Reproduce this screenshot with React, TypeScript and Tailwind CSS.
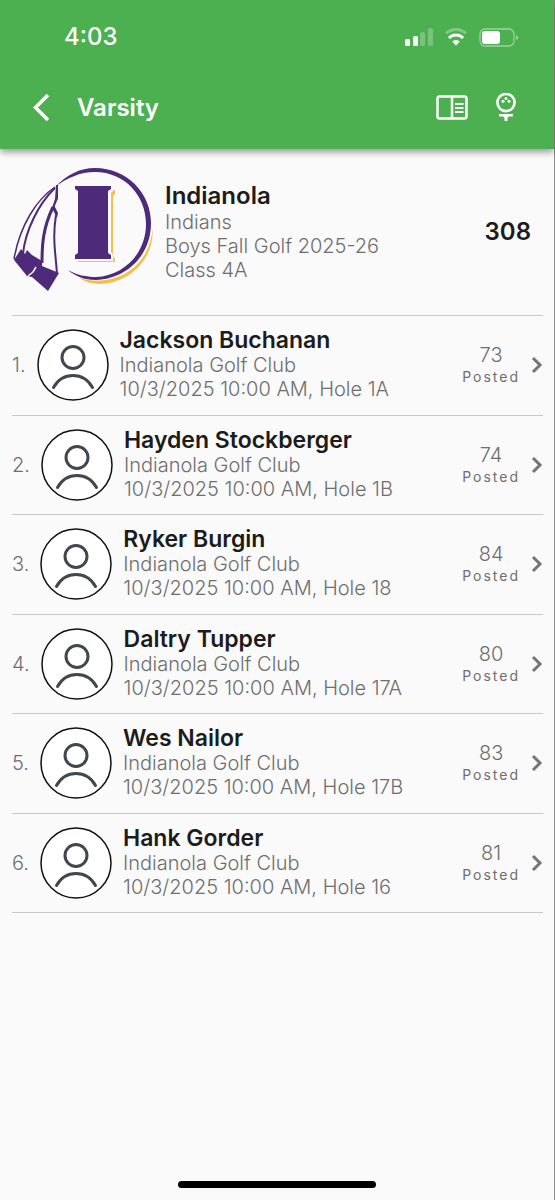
import type { ReactNode } from 'react'

interface Player {
  name: string
  hole: string
  score: number
}

const players: Player[] = [
  { name: 'Jackson Buchanan', hole: '1A', score: 73 },
  { name: 'Hayden Stockberger', hole: '1B', score: 74 },
  { name: 'Ryker Burgin', hole: '18', score: 84 },
  { name: 'Daltry Tupper', hole: '17A', score: 80 },
  { name: 'Wes Nailor', hole: '17B', score: 83 },
  { name: 'Hank Gorder', hole: '16', score: 81 },
]

function StatusIcons() {
  return (
    <div className="flex items-center gap-3" aria-hidden="true">
      <svg width="28" height="18" viewBox="0 0 28 18" fill="#fff">
        <rect x="0" y="11" width="5" height="7" rx="1.5" />
        <rect x="8" y="8" width="5" height="10" rx="1.5" />
        <rect x="15" y="4" width="5" height="14" rx="1.5" opacity=".25" />
        <rect x="23" y="0" width="5" height="18" rx="1.5" opacity=".25" />
      </svg>
      <svg width="22" height="18" viewBox="0 0 22 18" fill="none" strokeWidth="3">
        <path d="M1 5.500a14.200 14.200 0 0 1 20 0" stroke="#fff" opacity=".3" />
        <path d="M4 10a9.900 9.900 0 0 1 14 0" stroke="#fff" />
        <path d="M7.200 13.500a5.400 5.400 0 0 1 7.600 0L11 17.500z" fill="#fff" />
      </svg>
      <svg width="40" height="19" viewBox="0 0 40 19">
        <rect x="1" y="1" width="34" height="17" rx="5" fill="none" stroke="#fff" strokeWidth="1.3" opacity=".45" />
        <rect x="3" y="3" width="18" height="13" rx="3" fill="#fff" />
        <path d="M37 7q2 1 2 2.500t-2 2.500z" fill="#fff" opacity=".5" />
      </svg>
    </div>
  )
}

function TeamLogo() {
  return (
    <svg className="shrink-0" width="141" height="126" viewBox="0 0 141 126" role="img" aria-label="Indianola logo">
      {/* Ring */}
      <path d="M67 111c36 10 70-10 73.500-49 2 27-20 54-52.500 55-9 0-16-3-21-6z" fill="#f3c14b" />
      <path
        d="M43 20C56 7 68 1 83 1c32 0 56 25 56 55 0 33-25 56-55 57-12 0-21-4-28-10 9 5 18 7 28 7 27-1 50-23 50-53C134 29 113 5 83 5 68 5 55 11 43 20z"
        fill="#4e2a7a"
      />
      {/* Letter block */}
      <path d="M68 23h35v4l-2 2v60l2 3v3H66v-4z" fill="#f3c14b" />
      <path d="M61 17h40v7l-2 2v59l2 3v6H61v-7l4-3V26l-4-2z" fill="#fafafa" />
      <path d="M63 19h36v3l-3 2v62l3 2v4H63v-4l3-2V24l-3-2z" fill="#4e2a7a" />
      {/* Feathers */}
      <g fill="none" stroke="#4e2a7a">
        <path d="M43 20C25 32 8 58 2 92" strokeWidth="1.500" />
        <path d="M43 21C26 37 13 65 11 87" strokeWidth="2" />
        <path d="M45 18v13l-4 10" strokeWidth="2" />
        <path d="M41 40C31 61 30 77 30 96" strokeWidth="3" />
        <path d="M44 48c-4 24 0 40 1 60" strokeWidth="2" />
      </g>
      <path d="M44 19l2 12-4 7 4 8-1 5-5-10 3-9z" fill="#4e2a7a" />
      <path d="M2 93l7-11 4 5 2-4 5 5 10 6v5l17 7-11 18-16-14-5-1z" fill="#4e2a7a" />
      <path d="M16 109l5-4 3-5" fill="none" stroke="#fafafa" strokeWidth="1.500" />
    </svg>
  )
}

function IconButton({ label, children }: { label: string; children: ReactNode }) {
  return (
    <button type="button" aria-label={label} className="flex h-9 items-center justify-center">
      {children}
    </button>
  )
}

function Header() {
  return (
    <header className="bg-[#4caf50] text-white shadow-[0_3px_7px_rgba(0,0,0,0.4)]">
      <div className="flex h-[74px] items-center justify-between pl-16 pr-[35px]">
        <span className="text-2xl font-medium">4:03</span>
        <StatusIcons />
      </div>
      <div className="flex h-[75px] items-center pb-2 pl-8 pr-[38px]">
        <IconButton label="Back">
          <svg width="18" height="28" viewBox="0 0 18 28" fill="none" stroke="#fff" strokeWidth="3.500">
            <path d="M16 1L3.500 13.500 16 26" />
          </svg>
        </IconButton>
        <h1 className="ml-[27px] flex-1 text-2xl font-semibold">Varsity</h1>
        <div className="flex items-center gap-7">
          <IconButton label="Scorecard">
            <svg width="32" height="26" viewBox="0 0 32 26" fill="none" stroke="#fff">
              <rect x="1.500" y="1.500" width="29" height="22" rx="2" strokeWidth="2.500" />
              <path d="M16 2v22" strokeWidth="2.500" />
              <path d="M19 9h8.500M19 13h8.500M19 17h8.500" strokeWidth="2" />
            </svg>
          </IconButton>
          <IconButton label="Golf">
            <svg width="20" height="29" viewBox="1 1 20 29">
              <circle cx="11" cy="10.500" r="8.600" fill="none" stroke="#fff" strokeWidth="2.600" />
              <circle cx="11" cy="6.500" r="1.500" fill="#fff" />
              <circle cx="8" cy="9.300" r="1.500" fill="#fff" />
              <circle cx="14" cy="9.300" r="1.500" fill="#fff" />
              <path d="M4 22h14v2.500h-3.500q-2 0-2 2V29h-3v-2.500q0-2-2-2H4z" fill="#fff" />
            </svg>
          </IconButton>
        </div>
      </div>
    </header>
  )
}

function PlayerRow({ player, place }: { player: Player; place: number }) {
  return (
    <li className="border-b border-[#c8c8c8]">
      <a href="#" className="flex h-full items-center">
        <span className="text-xl font-light">{place}.</span>
        <svg className="ml-[11px] shrink-0" width="72" height="72" viewBox="0 0 72 72" fill="none" aria-hidden="true">
          <circle cx="36" cy="36" r="35" fill="#fff" stroke="#111" strokeWidth="1.500" />
          <g stroke="#42464f" strokeWidth="3" strokeLinecap="round">
            <circle cx="36" cy="28.500" r="11" />
            <path d="M16.500 58.500c9-16 30-16 39 0" />
          </g>
        </svg>
        <div className="ml-[11px] flex-1 whitespace-nowrap pb-0.5 text-xl/6 font-light">
          <h3 className="text-[23px]/[26px] font-semibold text-[#1c1c1c]">{player.name}</h3>
          <p>Indianola Golf Club</p>
          <p>10/3/2025 10:00 AM, Hole {player.hole}</p>
        </div>
        <div className="text-center">
          <p className="text-xl/6 font-light">{player.score}</p>
          <p className="text-sm/5 tracking-[2px]">Posted</p>
        </div>
        <svg className="ml-[11px] shrink-0" width="12" height="18" viewBox="0 0 12 18" fill="none" stroke="#757575" strokeWidth="3">
          <path d="M2 2l7 7-7 7" />
        </svg>
      </a>
    </li>
  )
}

export default function App() {
  return (
    <div className="flex min-h-screen flex-col border-r border-[#8c8c8c] bg-[#fafafa] font-['Inter','Liberation_Sans',sans-serif] text-[#6e6e6e]">
      <Header />

      <main className="flex-1 pl-3 pr-[11px]">
        {/* Team summary */}
        <section className="flex items-start border-b border-[#c8c8c8] pb-[22px] pr-3 pt-[18px]">
          <TeamLogo />
          <div className="ml-3 mt-[15px] flex-1 text-xl/6 font-light">
            <h2 className="text-2xl/7 font-semibold text-[#1c1c1c]">Indianola</h2>
            <p>Indians</p>
            <p>Boys Fall Golf 2025-26</p>
            <p>Class 4A</p>
          </div>
          <strong className="self-center pt-1 text-2xl font-semibold text-[#1c1c1c]">308</strong>
        </section>

        <ol className="grid min-h-[597px] auto-rows-fr">
          {players.map((player, i) => (
            <PlayerRow key={player.name} player={player} place={i + 1} />
          ))}
        </ol>
      </main>

      {/* Home indicator */}
      <div className="mx-auto mb-3 h-[7px] w-[198px] rounded-full bg-black" />
    </div>
  )
}
